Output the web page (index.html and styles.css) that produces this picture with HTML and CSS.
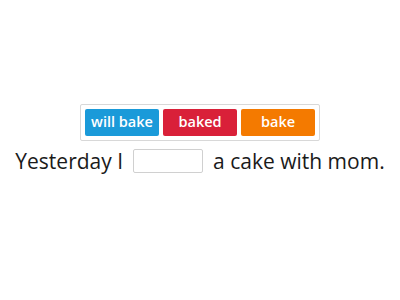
FILE: index.html
```html
<!DOCTYPE html>
<html>
<head>
<meta charset="utf-8">
<link rel="stylesheet" href="styles.css">
</head>
<body>
<div class="page">
  <div class="options">
    <div class="opt blue">will bake</div>
    <div class="opt red">baked</div>
    <div class="opt orange">bake</div>
  </div>
  <div class="sentence">
    <span>Yesterday I</span>
    <span class="blank"></span>
    <span>a cake with mom.</span>
  </div>
</div>
</body>
</html>
```
FILE: styles.css
```css
html, body {
  margin: 0;
  padding: 0;
  background: #ffffff;
}
.page {
  width: 400px;
  height: 300px;
  display: flex;
  flex-direction: column;
  align-items: center;
  padding-top: 104px;
  box-sizing: border-box;
  font-family: "Open Sans", sans-serif;
}
.options {
  display: flex;
  gap: 4px;
  padding: 4px;
  border: 1px solid #d8d8d8;
  border-radius: 2px;
}
.opt {
  width: 74px;
  height: 27px;
  padding-bottom: 3px;
  box-sizing: border-box;
  display: flex;
  align-items: center;
  justify-content: center;
  color: #ffffff;
  font-weight: 600;
  font-size: 14.5px;
  border-radius: 2px;
}
.blue { background: #1a9ad9; }
.red { background: #d92039; }
.orange { background: #f47a00; }
.sentence {
  margin-top: 8px;
  display: flex;
  align-items: center;
  gap: 10px;
  font-size: 21px;
  color: #1a1a1a;
  line-height: 24px;
}
.blank {
  width: 70px;
  height: 24px;
  border: 1px solid #d0d0d0;
  box-sizing: border-box;
  border-radius: 2px;
}
```
